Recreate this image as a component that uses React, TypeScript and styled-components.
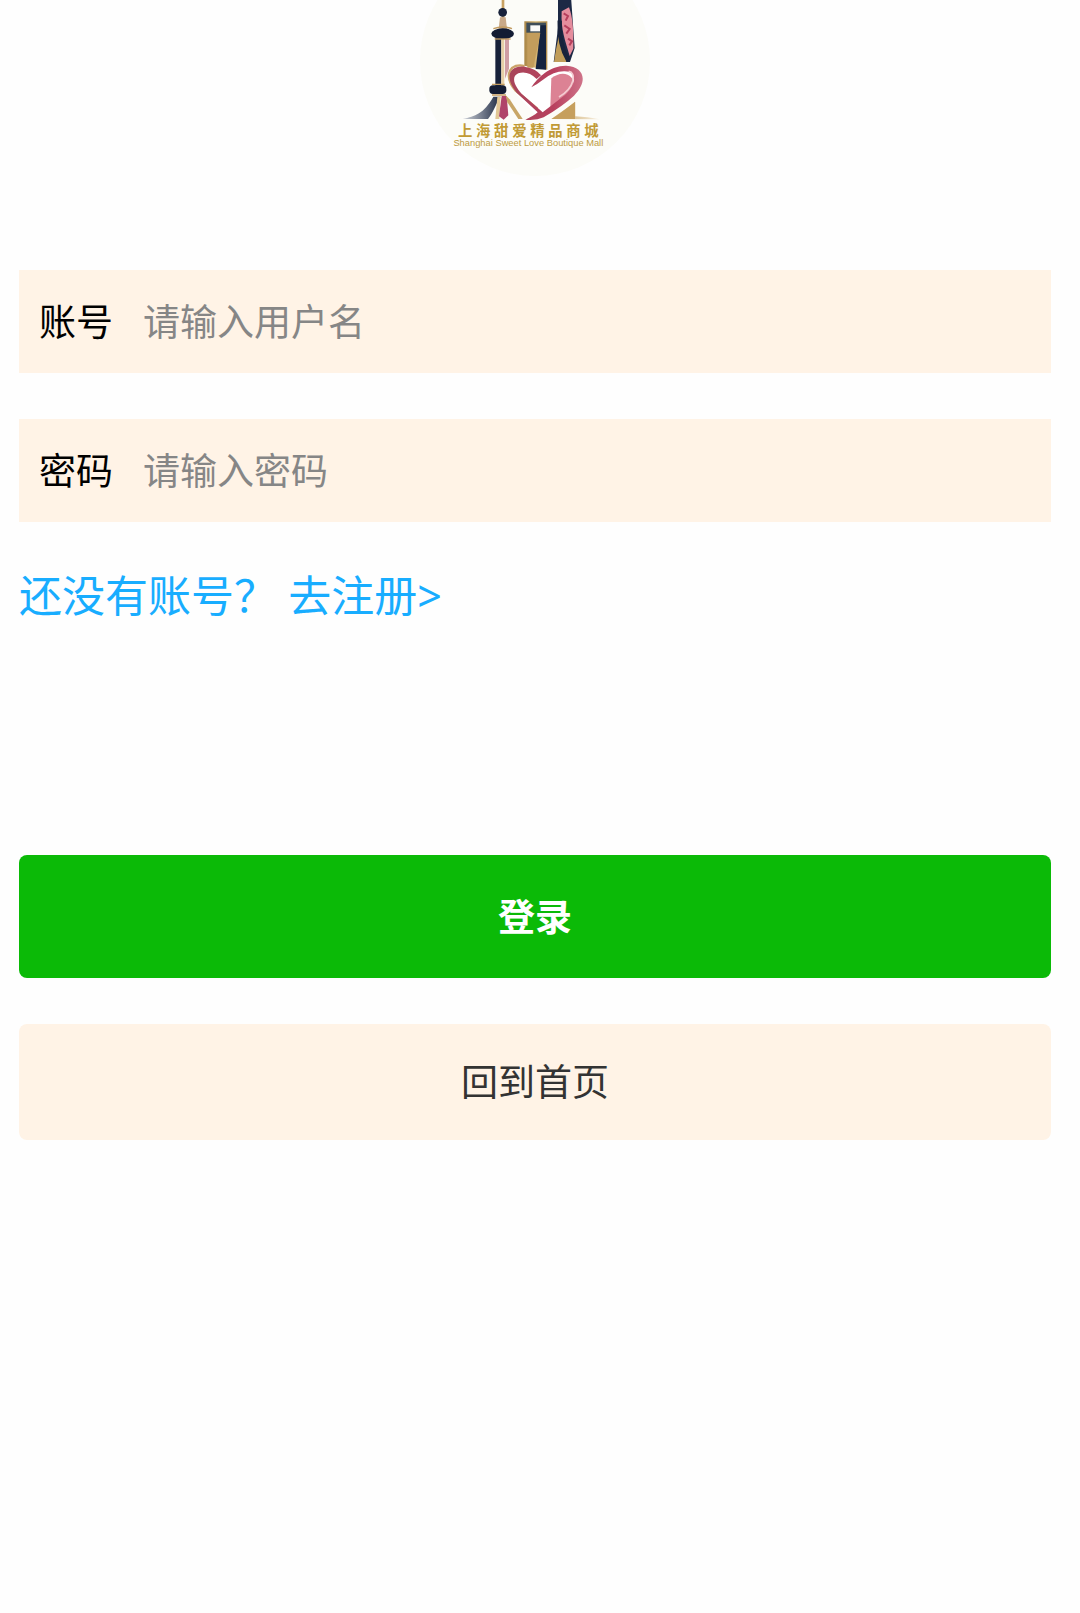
import styled, { createGlobalStyle } from 'styled-components'

const GlobalStyle = createGlobalStyle`
  * {
    box-sizing: border-box;
  }

  body {
    margin: 0;
    background: #fefefe;
    font-family: 'Noto Sans', 'Noto Sans CJK SC', sans-serif;
  }
`

const Page = styled.main`
  padding: 0 29px 0 19px;
`

const LogoWrapper = styled.header`
  height: 176px;
  display: flex;
  justify-content: center;
  align-items: flex-end;
  overflow: hidden;

  svg {
    flex: 0 0 auto;
    display: block;
  }
`

const Form = styled.form`
  display: flex;
  flex-direction: column;
  padding-top: 94px;
`

const Fields = styled.div`
  display: flex;
  flex-direction: column;
  gap: 46px;
`

const Field = styled.div`
  display: flex;
  align-items: center;
  height: 103px;
  padding: 0 20px;
  background: #fff3e6;
  font-size: 37px;
  line-height: 56px;

  label {
    flex: 0 0 auto;
    color: #000;
  }

  input {
    flex: 1 1 auto;
    min-width: 0;
    margin-left: 30px;
    padding: 0;
    border: 0;
    outline: 0;
    background: transparent;
    color: #000;
    font: inherit;

    &::placeholder {
      color: #868686;
      opacity: 1;
    }
  }
`

const RegisterLink = styled.a`
  align-self: flex-start;
  margin-top: 46px;
  color: #18adff;
  font-size: 43px;
  line-height: 56px;
  text-decoration: none;
`

const Actions = styled.div`
  display: flex;
  flex-direction: column;
  gap: 46px;
  margin-top: 231px;
`

const Button = styled.button<{ $primary?: boolean }>`
  height: ${({ $primary }) => ($primary ? '123px' : '116px')};
  padding: 0;
  border: 0;
  border-radius: 8px;
  background: ${({ $primary }) => ($primary ? '#0bba07' : '#fff3e6')};
  color: ${({ $primary }) => ($primary ? '#fff' : '#333')};
  font-family: inherit;
  font-size: 37px;
  font-weight: ${({ $primary }) => ($primary ? 700 : 400)};
  line-height: 56px;
  cursor: pointer;
`

const Logo = () => (
  <svg
    width="230"
    height="230"
    viewBox="30 -162 690 690"
    role="img"
    aria-label="上海甜爱精品商城"
  >
    <defs>
      <linearGradient id="gold" x1="0" x2="1">
        <stop offset="0" stopColor="#a98545" />
        <stop offset="0.5" stopColor="#d6b777" />
        <stop offset="1" stopColor="#b28d4c" />
      </linearGradient>
      <linearGradient id="heart" x1="0" x2="1">
        <stop offset="0" stopColor="#a8465a" />
        <stop offset="0.6" stopColor="#b8405e" />
        <stop offset="1" stopColor="#cf7389" />
      </linearGradient>
      <linearGradient id="sweep" x1="0" x2="1">
        <stop offset="0" stopColor="#cfd3da" />
        <stop offset="1" stopColor="#1d2942" />
      </linearGradient>
      <linearGradient id="ground" x1="0" x2="1">
        <stop offset="0" stopColor="#c49b54" />
        <stop offset="1" stopColor="#f8f1e2" />
      </linearGradient>
    </defs>
    <circle cx="375" cy="183" r="345" fill="#fcfcf8" />

    {/* pearl tower */}
    <path d="M275 -60h8V85h-8z" fill="#c9a263" />
    <circle cx="278" cy="37" r="13" fill="#17213a" />
    <path d="M270 52h17l4 34h-25z" fill="#c9a988" />
    <path d="M256 112h18v148h-18z" fill="#17213a" />
    <path d="M274 112h9v148h-9z" fill="#e6cfa6" />
    <path d="M285 114h12v92l-12 30z" fill="#cf9da3" />
    <ellipse cx="278" cy="101" rx="34" ry="16" fill="#131c33" />
    <path d="M250 86q28 -10 56 0" fill="none" stroke="#c39c61" strokeWidth="4" />
    <path d="M254 117h48" stroke="#c39c61" strokeWidth="4" />
    <rect x="238" y="256" width="51" height="26" rx="11" fill="#131c33" />
    <path d="M246 253h38M246 285h42" stroke="#c39c61" strokeWidth="4" />
    <path d="M250 290h22c-16 24 -20 44 -38 67h-76c38 -10 62 -14 92 -67z" fill="url(#sweep)" />
    <path d="M262 290h10l-4 67h-12z" fill="#e2c795" />
    <path d="M275 288h15l5 58-14 13-14-10z" fill="#b0446a" />
    <path d="M287 286l12 12 39 59h-13l-33-50z" fill="#c8a667" />

    {/* bottle opener tower */}
    <path d="M343 64h69v145l-69 -12z" fill="url(#gold)" />
    <path d="M349 68h59v30h-59z" fill="#3e4d59" />
    <path d="M361 76h29v18h-29z" fill="#fafafa" />
    <path d="M393 76h15v133l-31 -2z" fill="#15233f" />
    <path d="M352 99h39l-21 104h-18z" fill="#c39d5c" />

    {/* twisted tower */}
    <path d="M444 -10q20 -16 39 0l11 154-14 42h-49l13-102z" fill="#1c2945" />
    <path d="M455 34l22 -12c11 28 14 68 13 124l-11 22c-13 -46 -27 -78 -24 -134z" fill="#e58d9d" />
    <path d="M461 40l13 8-7 14M463 76l16 11-10 14M474 116l12 8-8 12" fill="none" stroke="#b63e5c" strokeWidth="6" />
    <path d="M446 110q-9 38 -14 76h37q-4 -42 -23 -76z" fill="#c19d59" />
    <path d="M449 62c-2 48 6 87 26 120" fill="none" stroke="#17223b" strokeWidth="13" />

    {/* ground */}
    <path d="M424 357l72 -51v43q38 2 73 9z" fill="url(#ground)" />
    <path d="M430 356l65 -51v52z" fill="#c69f5d" />

    {/* heart */}
    <path d="M386 353L318 282C280 235 306 200 347 207Q375 211 389 228Q424 194 467 201C525 209 519 253 481 287L405 346z" fill="#fff" />
    <path d="M424 235q26 -20 49 -11c31 15 18 55 -10 76l-42 20z" fill="#dc8294" />
    <path d="M382 326l-66 -55C276 222 305 187 344 198" fill="none" stroke="#cba36a" strokeWidth="7" />
    <path
      d="M364 262C384 231 421 196 469 197C522 199 536 244 492 287Q461 316 401 352Q379 362 346 359Q370 349 383 337L320 278C276 224 306 193 347 201Q379 207 393 226L380 237Q353 211 325 220C298 232 319 265 340 286L398 337L465 285C501 251 502 214 464 214Q433 213 399 239Q381 253 364 262z"
      fill="url(#heart)"
    />
    <path d="M447 291c49 -29 52 -74 29 -77" fill="none" stroke="#f4cbd1" strokeWidth="5" />

    <text
      x="355"
      y="409"
      textAnchor="middle"
      fontFamily="'Noto Sans', 'Noto Sans CJK SC', sans-serif"
      fontSize="43"
      fontWeight="700"
      fill="#c19a35"
    >
      上 海 甜 爱 精 品 商 城
    </text>
    <text
      x="355"
      y="438"
      textAnchor="middle"
      fontFamily="'Liberation Sans', sans-serif"
      fontSize="28"
      fill="#bd9b42"
    >
      Shanghai Sweet Love Boutique Mall
    </text>
  </svg>
)

const App = () => {
  return (
    <>
      <GlobalStyle />
      <Page>
        <LogoWrapper>
          <Logo />
        </LogoWrapper>
        <Form>
          <Fields>
            <Field>
              <label htmlFor="username">账号</label>
              <input id="username" type="text" placeholder="请输入用户名" />
            </Field>
            <Field>
              <label htmlFor="password">密码</label>
              <input id="password" type="password" placeholder="请输入密码" />
            </Field>
          </Fields>
          <RegisterLink href="#register">还没有账号？ 去注册&gt;</RegisterLink>
          <Actions>
            <Button type="button" $primary>
              登录
            </Button>
            <Button type="button">回到首页</Button>
          </Actions>
        </Form>
      </Page>
    </>
  )
}

export default App
